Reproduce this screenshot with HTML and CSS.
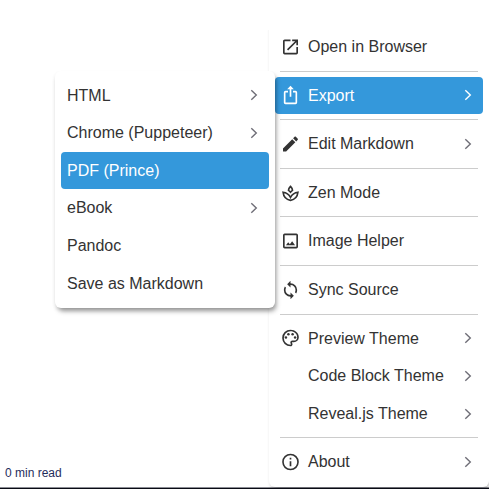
FILE: index.html
```html
<!DOCTYPE html>
<html lang="en">
<head>
<meta charset="utf-8">
<title>Preview</title>
<link rel="stylesheet" href="styles.css">
</head>
<body>
<svg class="defs" aria-hidden="true">
  <symbol id="chevron" viewBox="0 0 8 12"><path d="M1.3 1.2 6.3 6 1.3 10.8" fill="none" stroke="currentColor" stroke-width="1.4"/></symbol>
</svg>
<footer class="status">0 min read</footer>

<nav class="menu menu-main">
  <div class="item"><svg class="icon" viewBox="0 0 24 24"><path d="M14,3V5H17.59L7.76,14.83L9.17,16.24L19,6.41V10H21V3M19,19H5V5H12V3H5C3.89,3 3,3.9 3,5V19A2,2 0 0,0 5,21H19A2,2 0 0,0 21,19V12H19V19Z"/></svg><span class="label">Open in Browser</span></div>
  <div class="separator"></div>
  <div class="item active"><svg class="icon" viewBox="0 0 24 24"><path d="M12,1L8,5H11V14H13V5H16M18,23H6C4.89,23 4,22.1 4,21V9A2,2 0 0,1 6,7H9V9H6V21H18V9H15V7H18A2,2 0 0,1 20,9V21A2,2 0 0,1 18,23Z"/></svg><span class="label">Export</span><svg class="arrow"><use href="#chevron"/></svg></div>
  <div class="separator"></div>
  <div class="item"><svg class="icon" viewBox="0 0 24 24"><path d="M20.71,7.04C21.1,6.65 21.1,6 20.71,5.63L18.37,3.29C18,2.9 17.35,2.9 16.96,3.29L15.12,5.12L18.87,8.87M3,17.25V21H6.75L17.81,9.93L14.06,6.18L3,17.25Z"/></svg><span class="label">Edit Markdown</span><svg class="arrow"><use href="#chevron"/></svg></div>
  <div class="separator"></div>
  <div class="item"><svg class="icon outline" viewBox="0 0 24 24"><path d="M12 4C10.4 5.6 9.6 7.6 9.6 8.8 10.4 9.4 11.3 10.2 12 11 12.7 10.2 13.6 9.4 14.4 8.8 14.4 7.6 13.6 5.6 12 4ZM12 17.3C10.1 13.8 6.8 11.5 3.1 11.1 3.6 16.1 7.2 20 12 20.8 16.8 20 20.4 16.1 20.9 11.1 17.2 11.5 13.9 13.8 12 17.3Z"/></svg><span class="label">Zen Mode</span></div>
  <div class="separator"></div>
  <div class="item"><svg class="icon" viewBox="0 0 24 24"><path d="M19,19H5V5H19M19,3H5A2,2 0 0,0 3,5V19A2,2 0 0,0 5,21H19A2,2 0 0,0 21,19V5A2,2 0 0,0 19,3M13.96,12.29L11.21,15.83L9.25,13.47L6.5,17H17.5L13.96,12.29Z"/></svg><span class="label">Image Helper</span></div>
  <div class="separator"></div>
  <div class="item"><svg class="icon" viewBox="0 0 24 24"><path d="M12,18A6,6 0 0,1 6,12C6,11 6.25,10.03 6.7,9.2L5.24,7.74C4.46,8.97 4,10.43 4,12A8,8 0 0,0 12,20V23L16,19L12,15M12,4V1L8,5L12,9V6A6,6 0 0,1 18,12C18,13 17.75,13.97 17.3,14.8L18.76,16.26C19.54,15.03 20,13.57 20,12A8,8 0 0,0 12,4Z"/></svg><span class="label">Sync Source</span></div>
  <div class="separator"></div>
  <div class="item"><svg class="icon" viewBox="0 0 24 24"><path d="M12,22A10,10 0 0,1 2,12A10,10 0 0,1 12,2C17.5,2 22,6 22,11A6,6 0 0,1 16,17H14.2C13.9,17 13.7,17.2 13.7,17.5C13.7,17.6 13.8,17.7 13.8,17.8C14.2,18.3 14.4,18.9 14.4,19.5C14.5,20.9 13.4,22 12,22M12,4A8,8 0 0,0 4,12A8,8 0 0,0 12,20C12.3,20 12.5,19.8 12.5,19.5C12.5,19.3 12.4,19.2 12.4,19.1C12,18.6 11.8,18.1 11.8,17.5C11.8,16.1 12.9,15 14.3,15H16A4,4 0 0,0 20,11C20,7.1 16.4,4 12,4"/><circle cx="6.5" cy="11.5" r="1.5"/><circle cx="9.5" cy="7.5" r="1.5"/><circle cx="14.5" cy="7.5" r="1.5"/><circle cx="17.5" cy="11.5" r="1.5"/></svg><span class="label">Preview Theme</span><svg class="arrow"><use href="#chevron"/></svg></div>
  <div class="item"><span class="icon"></span><span class="label">Code Block Theme</span><svg class="arrow"><use href="#chevron"/></svg></div>
  <div class="item"><span class="icon"></span><span class="label">Reveal.js Theme</span><svg class="arrow"><use href="#chevron"/></svg></div>
  <div class="separator"></div>
  <div class="item"><svg class="icon" viewBox="0 0 24 24"><path d="M11,9H13V7H11M12,20C7.59,20 4,16.41 4,12C4,7.59 7.59,4 12,4C16.41,4 20,7.59 20,12C20,16.41 16.41,20 12,20M12,2A10,10 0 0,0 2,12A10,10 0 0,0 12,22A10,10 0 0,0 22,12A10,10 0 0,0 12,2M11,17H13V11H11V17Z"/></svg><span class="label">About</span><svg class="arrow"><use href="#chevron"/></svg></div>
</nav>

<nav class="menu menu-sub">
  <div class="item"><span class="label">HTML</span><svg class="arrow"><use href="#chevron"/></svg></div>
  <div class="item"><span class="label">Chrome (Puppeteer)</span><svg class="arrow"><use href="#chevron"/></svg></div>
  <div class="item active"><span class="label">PDF (Prince)</span></div>
  <div class="item"><span class="label">eBook</span><svg class="arrow"><use href="#chevron"/></svg></div>
  <div class="item"><span class="label">Pandoc</span></div>
  <div class="item"><span class="label">Save as Markdown</span></div>
</nav>
</body>
</html>
```
FILE: styles.css
```css
* { box-sizing: border-box; }

body {
  margin: 0;
  height: 489px;
  display: flex;
  flex-direction: column;
  justify-content: flex-end;
  overflow: hidden;
  background: #fff;
  font-family: "Liberation Sans", Arial, sans-serif;
}

.defs { position: absolute; width: 0; height: 0; }

.status {
  height: 25px;
  padding: 0 5px;
  border-bottom: 1px solid #080a14;
  box-shadow: inset 0 -1px #8b8c94;
  color: #1f2d5c;
  font-size: 12px;
  line-height: 18px;
}

.menu {
  position: absolute;
  width: 220px;
  padding: 6px;
  border-radius: 6px;
  background: #fff;
  color: #333;
  font-size: 16px;
  line-height: 18px;
}

.menu-main {
  top: 22px;
  left: 269px;
  box-shadow: 0 2px 3px rgba(0, 0, 0, 0.06), 2px 3px 5px -2px rgba(0, 0, 0, 0.3);
  clip-path: inset(8px 0 -1px -4px);
}

.menu-sub {
  top: 70.6px;
  left: 55px;
  box-shadow: 2px 4px 5px -1px rgba(0, 0, 0, 0.4), 0 2px 4px rgba(0, 0, 0, 0.07);
  clip-path: inset(0 -10px -12px -10px);
}

.item {
  display: flex;
  align-items: center;
  height: 37.6px;
  padding: 0 11px 0 6px;
  border-radius: 4px;
  white-space: nowrap;
}

.item.active { background: #3498db; color: #fff; }

.label { padding-top: 0.35px; }

.icon {
  flex: none;
  width: 20px;
  height: 20px;
  margin: 0 8px 0 -1px;
  fill: currentColor;
  transform: translateX(0.5px);
}

.outline { fill: none; stroke: currentColor; stroke-width: 2; }

.arrow {
  width: 8px;
  height: 12px;
  margin-left: auto;
  color: #6f6e77;
}

.active .arrow { color: #fff; }

.separator {
  height: 1px;
  margin: 5px;
  background: #ccc;
}
```
